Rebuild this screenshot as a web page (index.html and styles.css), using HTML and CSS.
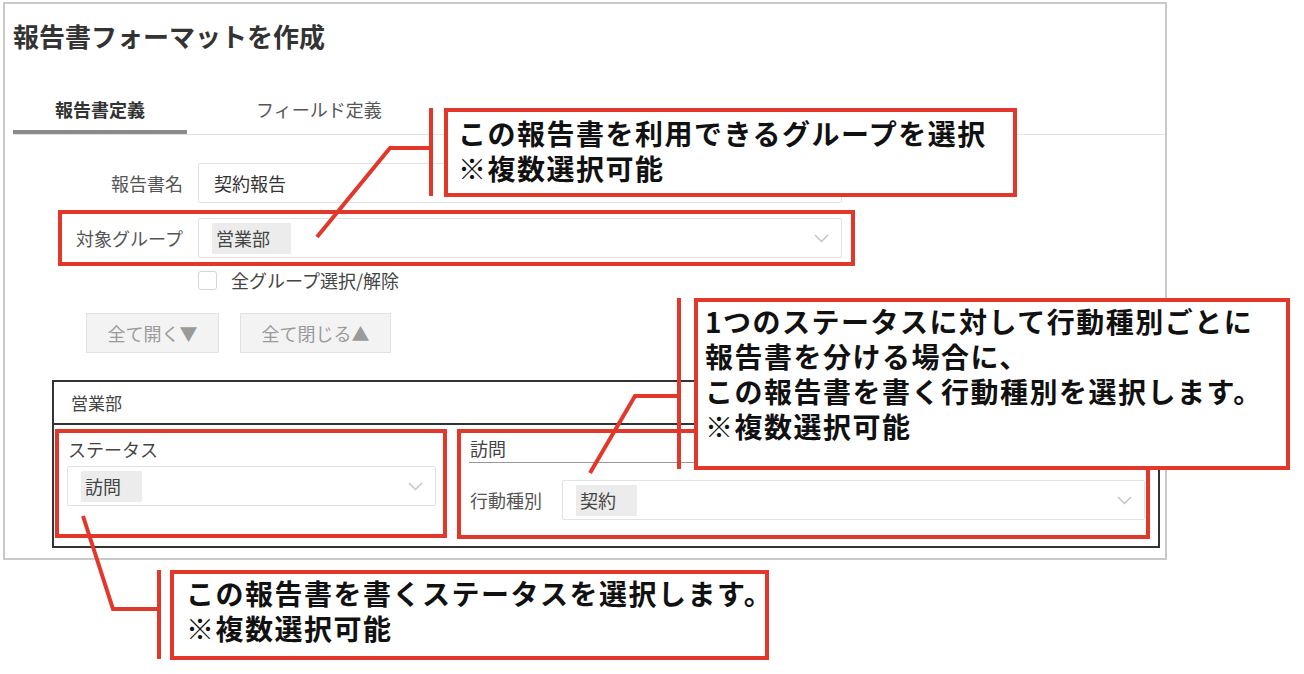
FILE: index.html
```html
<!DOCTYPE html>
<html lang="ja">
<head>
    <meta charset="UTF-8">
    <meta name="viewport" content="width=device-width, initial-scale=1.0">
    <title>報告書フォーマットを作成</title>
    <link rel="stylesheet" href="styles.css">
</head>
<body>
    <div class="frame">
        <h1 class="title">報告書フォーマットを作成</h1>

        <div class="tabs">
            <div class="tab active">報告書定義</div>
            <div class="tab">フィールド定義</div>
        </div>

        <!-- Basic settings -->
        <div class="form">
            <div class="label">報告書名</div>
            <div class="field">契約報告</div>

            <div class="label">対象グループ</div>
            <div class="field select">
                <span class="tag">営業部</span>
                <svg class="chevron" width="15" height="9" viewBox="0 0 15 9"><polyline points="1,1 7.5,7.5 14,1"/></svg>
            </div>

            <div></div>
            <label class="check"><span class="box"></span>全グループ選択/解除</label>
        </div>

        <div class="toggles">
            <button class="toggle">全て開く▼</button>
            <button class="toggle">全て閉じる▲</button>
        </div>

        <!-- Group block -->
        <div class="group">
            <div class="group-head">営業部</div>
            <div class="group-body">
                <div class="status-col">
                    <div class="col-label">ステータス</div>
                    <div class="field select">
                        <span class="tag">訪問</span>
                        <svg class="chevron" width="15" height="9" viewBox="0 0 15 9"><polyline points="1,1 7.5,7.5 14,1"/></svg>
                    </div>
                </div>
                <div class="action-col">
                    <div class="action-head">訪問</div>
                    <div class="action-row">
                        <span class="action-label">行動種別</span>
                        <div class="field select">
                            <span class="tag">契約</span>
                            <svg class="chevron" width="15" height="9" viewBox="0 0 15 9"><polyline points="1,1 7.5,7.5 14,1"/></svg>
                        </div>
                    </div>
                </div>
            </div>
        </div>
    </div>

    <!-- Annotation overlay -->
    <svg class="marks" width="1304" height="674" viewBox="0 0 1304 674">
        <rect x="60" y="212" width="793" height="52"/>
        <rect x="57" y="431" width="388" height="105"/>
        <rect x="459" y="431" width="689" height="106"/>

        <line x1="431" y1="108" x2="431" y2="196"/>
        <polyline points="431,148 390,148 317,237"/>

        <line x1="679" y1="298" x2="679" y2="469"/>
        <polyline points="679,396 635,396 590,473"/>

        <line x1="159" y1="570" x2="159" y2="659"/>
        <polyline points="159,609 113,609 83,516"/>
    </svg>

    <div class="callout c1">この報告書を利用できるグループを選択<br>※複数選択可能</div>
    <div class="callout c2">1つのステータスに対して行動種別ごとに<br>報告書を分ける場合に、<br>この報告書を書く行動種別を選択します。<br>※複数選択可能</div>
    <div class="callout c3">この報告書を書くステータスを選択します。<br>※複数選択可能</div>
</body>
</html>
```

FILE: styles.css
```css
* {
    box-sizing: border-box;
}

body {
    margin: 0;
    background: white;
    font-family: "Noto Sans CJK JP", "Noto Sans", sans-serif;
    color: #333;
    position: relative;
    width: 1304px;
    height: 674px;
    overflow: hidden;
}

.frame {
    margin: 2px 0 0 3px;
    width: 1164px;
    height: 558px;
    border: 2px solid #c9c9c9;
}

.title {
    margin: 15px 0 0 8px;
    font-size: 26px;
    line-height: 34px;
    font-weight: bold;
    color: #333;
}

.tabs {
    display: flex;
    margin: 44px 0 0 8px;
    border-bottom: 1px solid #e3e3e3;
}

.tab {
    padding: 0 42px 9px;
    font-size: 18px;
    line-height: 24px;
    color: #555;
    border-bottom: 4px solid transparent;
}

.tab + .tab {
    margin-left: 27px;
}

.tab.active {
    font-weight: bold;
    color: #333;
    border-bottom-color: #8a8a8a;
}

.form {
    display: grid;
    grid-template-columns: 178px 644px;
    column-gap: 15px;
    row-gap: 15px;
    margin-top: 28px;
}

.label {
    text-align: right;
    font-size: 18px;
    line-height: 40px;
    color: #555;
}

.field {
    height: 40px;
    border: 1px solid #e2e2e2;
    border-radius: 2px;
    padding-left: 15px;
    font-size: 18px;
    line-height: 38px;
    color: #333;
}

.select {
    display: flex;
    align-items: center;
    justify-content: space-between;
    padding: 0 12px 0 13px;
}

.tag {
    background: #ececec;
    padding: 0 21px 0 4px;
    line-height: 31px;
    font-size: 18px;
    color: #444;
}

.chevron polyline {
    fill: none;
    stroke: #c4c4c4;
    stroke-width: 1.5;
}

.check {
    display: flex;
    align-items: center;
    gap: 14px;
    margin-top: -3px;
    font-size: 18px;
    line-height: 20px;
    color: #444;
}

.box {
    width: 19px;
    height: 19px;
    border: 1px solid #d6d6d6;
    border-radius: 3px;
    background: white;
}

.toggles {
    display: flex;
    gap: 21px;
    margin: 23px 0 0 81px;
}

.toggle {
    height: 40px;
    padding: 0 20.5px;
    background: #f3f3f3;
    border: 1px solid #e2e2e2;
    border-radius: 0;
    font-family: inherit;
    font-size: 18px;
    color: #9a9a9a;
}

.group {
    margin: 27px 0 0 47px;
    width: 1108px;
    border: 2px solid #333;
}

.group-head {
    height: 43px;
    padding-left: 17px;
    border-bottom: 2px solid #333;
    font-size: 17px;
    line-height: 41px;
    color: #444;
}

.group-body {
    display: flex;
    gap: 33px;
    padding: 12px 13px 26px;
}

.status-col {
    width: 369px;
}

.col-label {
    font-size: 18px;
    line-height: 24px;
    margin-bottom: 5px;
    padding-left: 1px;
    color: #444;
}

.action-col {
    flex: 1;
}

.action-head {
    font-size: 18px;
    line-height: 22px;
    padding: 0 0 3px 1px;
    border-bottom: 1px solid #9a9a9a;
    color: #444;
}

.action-row {
    display: flex;
    align-items: center;
    gap: 20px;
    margin-top: 17px;
}

.action-label {
    padding-left: 1px;
    font-size: 18px;
    color: #555;
}

.action-row .select {
    flex: 1;
}

/* annotations */
.marks {
    position: absolute;
    left: 0;
    top: 0;
    pointer-events: none;
}

.marks rect,
.marks line,
.marks polyline {
    fill: none;
    stroke: #e2372b;
    stroke-width: 4;
}

.callout {
    position: absolute;
    background: white;
    border: 4px solid #e2372b;
    font-size: 28px;
    line-height: 35px;
    font-weight: bold;
    letter-spacing: 1.5px;
    color: #111;
    white-space: nowrap;
}

.c1 {
    left: 444px;
    top: 108px;
    width: 573px;
    height: 89px;
    padding: 4px 10px;
}

.c2 {
    left: 694px;
    top: 298px;
    width: 596px;
    height: 172px;
    padding: 2px 7px;
}

.c3 {
    left: 170px;
    top: 570px;
    width: 599px;
    height: 90px;
    padding: 2px 12px;
}
```
